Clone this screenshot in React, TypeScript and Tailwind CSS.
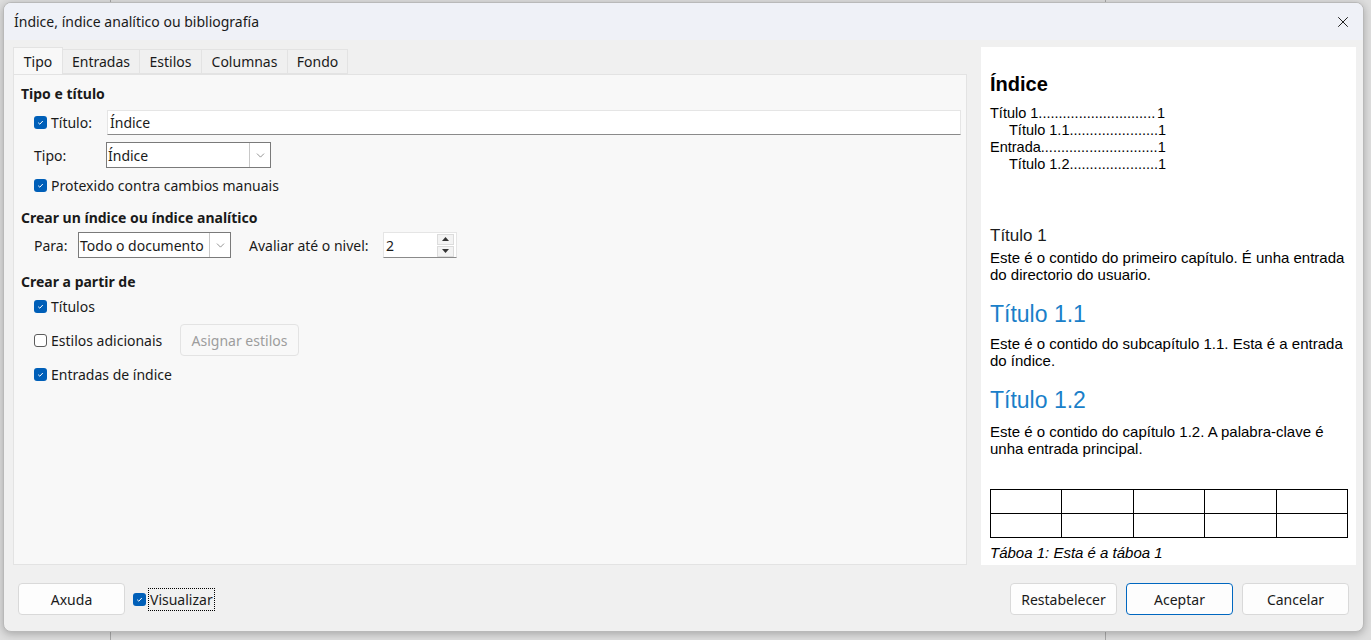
import { ChevronDown, X } from "lucide-react";

const ui = { fontFamily: '"Segoe UI", "Noto Sans", sans-serif' };
const doc = { fontFamily: '"Liberation Sans", Arial, sans-serif' };

function Check({ on = true }: { on?: boolean }) {
  if (!on) {
    return <span className="inline-block w-[13px] h-[13px] rounded-[3px] border border-[#5c5c5c] bg-white" />;
  }
  return (
    <span className="inline-flex items-center justify-center w-[13px] h-[13px] rounded-[3px] bg-[#005fb8]">
      <svg width="9" height="9" viewBox="0 0 9 9">
        <path d="M2.2 4.7 L3.8 6.2 L6.8 3" fill="none" stroke="white" strokeWidth="1" />
      </svg>
    </span>
  );
}

function Btn({ label, primary = false, disabled = false, className = "" }: { label: string; primary?: boolean; disabled?: boolean; className?: string }) {
  return (
    <button
      className={`h-[32px] rounded-[4px] border text-[14px] ${
        primary ? "border-[#0067c0] bg-[#fdfdfd] text-[#1a1a1a]" : disabled ? "border-[#e3e3e3] bg-[#f8f8f8] text-[#9d9d9d]" : "border-[#d9d9d9] bg-[#fdfdfd] text-[#1a1a1a]"
      } ${className}`}
    >
      {label}
    </button>
  );
}

const tocRows = [
  { label: "Título 1", dots: 29, indent: false },
  { label: "Título 1.1", dots: 22, indent: true },
  { label: "Entrada", dots: 29, indent: false },
  { label: "Título 1.2", dots: 22, indent: true },
];

const tabs = [
  { label: "Entradas", w: "w-[77px]" },
  { label: "Estilos", w: "w-[62px]" },
  { label: "Columnas", w: "w-[86px]" },
  { label: "Fondo", w: "w-[60px]" },
];

export default function App() {
  return (
    <div className="relative w-[1371px] h-[640px] bg-[#dedede] overflow-hidden" style={ui}>
      {/* application window behind the dialog */}
      <div className="absolute left-[110px] top-0 w-px h-full bg-[#a8a8a8]" />
      <div className="absolute left-[1105px] top-0 w-px h-full bg-[#a8a8a8]" />

      <div className="relative ml-[3px] mt-[2px] w-[1361px] h-[630px] rounded-[8px] bg-[#f0f0f0] border border-[#b9b9b9] shadow-[0_2px_8px_rgba(0,0,0,0.25)] flex flex-col overflow-hidden text-[#1a1a1a]">
        {/* title bar */}
        <div className="h-[37px] shrink-0 bg-[#eff1f7] flex items-center justify-between pl-[10px] pr-[11px]">
          <span className="text-[14px]">Índice, índice analítico ou bibliografía</span>
          <X size={18} strokeWidth={1.3} className="text-[#1a1a1a]" />
        </div>

        <div className="flex flex-1 pl-[9px] pr-[5px] pt-[7px]">
          {/* left side: tabs */}
          <div className="w-[954px] flex flex-col">
            <div className="flex h-[27px] items-end text-[14px]">
              <div className="w-[50px] h-[27px] flex items-center justify-center bg-[#f8f8f8] border border-b-0 border-[#e3e3e3]">Tipo</div>
              {tabs.map((t) => (
                <div key={t.label} className={`${t.w} h-[25px] flex items-center justify-center border border-l-0 border-[#e3e3e3]`}>
                  {t.label}
                </div>
              ))}
            </div>
            <div className="h-[491px] bg-[#f8f8f8] border border-[#e3e3e3] text-[14px] pl-[7px] pr-[5px] pt-[10px]">
              <div className="font-bold h-[18px] leading-[18px]">Tipo e título</div>
              <div className="flex items-center mt-[7px] pl-[13px]">
                <Check />
                <span className="ml-[4px] w-[56px]">Título:</span>
                <div className="flex-1 h-[25px] bg-white border border-[#e5e5e5] border-b-[#8a8a8a] flex items-center pl-[2px]">Índice</div>
              </div>
              <div className="flex items-center mt-[7px] pl-[13px]">
                <span className="w-[72px]">Tipo:</span>
                <div className="w-[165px] h-[26px] bg-white border border-[#7a7a7a] flex items-center">
                  <span className="flex-1 pl-[1px]">Índice</span>
                  <span className="w-[21px] h-full border-l border-[#c8c8c8] flex items-center justify-center">
                    <ChevronDown size={13} strokeWidth={1.2} className="text-[#5c5c5c]" />
                  </span>
                </div>
              </div>
              <div className="flex items-center mt-[5px] pl-[13px] h-[24px]">
                <Check />
                <span className="ml-[4px]">Protexido contra cambios manuais</span>
              </div>

              <div className="font-bold mt-[12px] h-[18px] leading-[18px]">Crear un índice ou índice analítico</div>
              <div className="flex items-center mt-[5px] pl-[13px]">
                <span className="w-[44px]">Para:</span>
                <div className="w-[153px] h-[26px] bg-white border border-[#7a7a7a] flex items-center">
                  <span className="flex-1 pl-[1px] whitespace-nowrap">Todo o documento</span>
                  <span className="w-[21px] h-full border-l border-[#c8c8c8] flex items-center justify-center">
                    <ChevronDown size={13} strokeWidth={1.2} className="text-[#5c5c5c]" />
                  </span>
                </div>
                <span className="ml-[18px] w-[134px]">Avaliar até o nivel:</span>
                <div className="w-[74px] h-[26px] bg-white border border-[#e5e5e5] border-b-[#8a8a8a] flex items-center">
                  <span className="flex-1 pl-[2px]">2</span>
                  <span className="w-[20px] h-full flex flex-col items-center justify-center gap-[1px] pr-[1px]">
                    <span className="w-[17px] h-[11px] bg-[#f3f3f3] border border-[#dcdcdc] flex items-center justify-center">
                      <svg width="7" height="4" viewBox="0 0 7 4"><path d="M0 4 L3.5 0 L7 4 Z" fill="#333" /></svg>
                    </span>
                    <span className="w-[17px] h-[11px] bg-[#f3f3f3] border border-[#dcdcdc] flex items-center justify-center">
                      <svg width="7" height="4" viewBox="0 0 7 4"><path d="M0 0 L3.5 4 L7 0 Z" fill="#333" /></svg>
                    </span>
                  </span>
                </div>
              </div>

              <div className="font-bold mt-[15px] h-[18px] leading-[18px]">Crear a partir de</div>
              <div className="flex items-center mt-[3px] pl-[13px] h-[24px]">
                <Check />
                <span className="ml-[4px]">Títulos</span>
              </div>
              <div className="flex items-center mt-[6px] pl-[13px]">
                <Check on={false} />
                <span className="ml-[4px] w-[129px]">Estilos adicionais</span>
                <Btn label="Asignar estilos" disabled className="w-[119px]" />
              </div>
              <div className="flex items-center mt-[6px] pl-[13px] h-[24px]">
                <Check />
                <span className="ml-[4px]">Entradas de índice</span>
              </div>
            </div>
          </div>

          {/* right side: preview */}
          <div className="ml-[14px] w-[375px] h-[518px] bg-white px-[9px] text-black" style={doc}>
            <div className="mt-[25px] text-[20px] font-bold leading-[24px]">Índice</div>
            <div className="mt-[9px] w-[175px] text-[14.5px] leading-[17px]">
              {tocRows.map((r) => (
                <div key={r.label} className={`flex justify-between whitespace-nowrap ${r.indent ? "pl-[19px]" : ""}`}>
                  <span>
                    {r.label}
                    {".".repeat(r.dots)}
                  </span>
                  <span>1</span>
                </div>
              ))}
            </div>
            <div className="mt-[52px] text-[17px] leading-[21px] text-[#1c1c1c]">Título 1</div>
            <div className="mt-[3px] text-[15px] leading-[17px]">Este é o contido do primeiro capítulo. É unha entrada do directorio do usuario.</div>
            <div className="mt-[18px] text-[23px] leading-[26px] text-[#1a7fc9]">Título 1.1</div>
            <div className="mt-[8px] text-[15px] leading-[17px]">Este é o contido do subcapítulo 1.1. Esta é a entrada do índice.</div>
            <div className="mt-[18px] text-[23px] leading-[26px] text-[#1a7fc9]">Título 1.2</div>
            <div className="mt-[10px] text-[15px] leading-[17px]">Este é o contido do capítulo 1.2. A palabra-clave é unha entrada principal.</div>
            <table className="mt-[32px] w-[358px] border-collapse">
              <tbody>
                {[0, 1].map((r) => (
                  <tr key={r}>
                    {[0, 1, 2, 3, 4].map((c) => (
                      <td key={c} className="h-[24px] border border-black" />
                    ))}
                  </tr>
                ))}
              </tbody>
            </table>
            <div className="mt-[6px] text-[15px] italic leading-[17px]">Táboa 1: Esta é a táboa 1</div>
          </div>
        </div>

        {/* button row */}
        <div className="h-[64px] shrink-0 flex items-center px-[14px]">
          <Btn label="Axuda" className="w-[107px]" />
          <div className="flex items-center ml-[8px]">
            <Check />
            <span className="ml-[2px] px-[1px] border border-dotted border-black text-[14px] leading-[21px]">Visualizar</span>
          </div>
          <div className="flex-1" />
          <div className="flex gap-[9px]">
            <Btn label="Restabelecer" className="w-[107px]" />
            <Btn label="Aceptar" primary className="w-[107px]" />
            <Btn label="Cancelar" className="w-[107px]" />
          </div>
        </div>
      </div>
    </div>
  );
}
